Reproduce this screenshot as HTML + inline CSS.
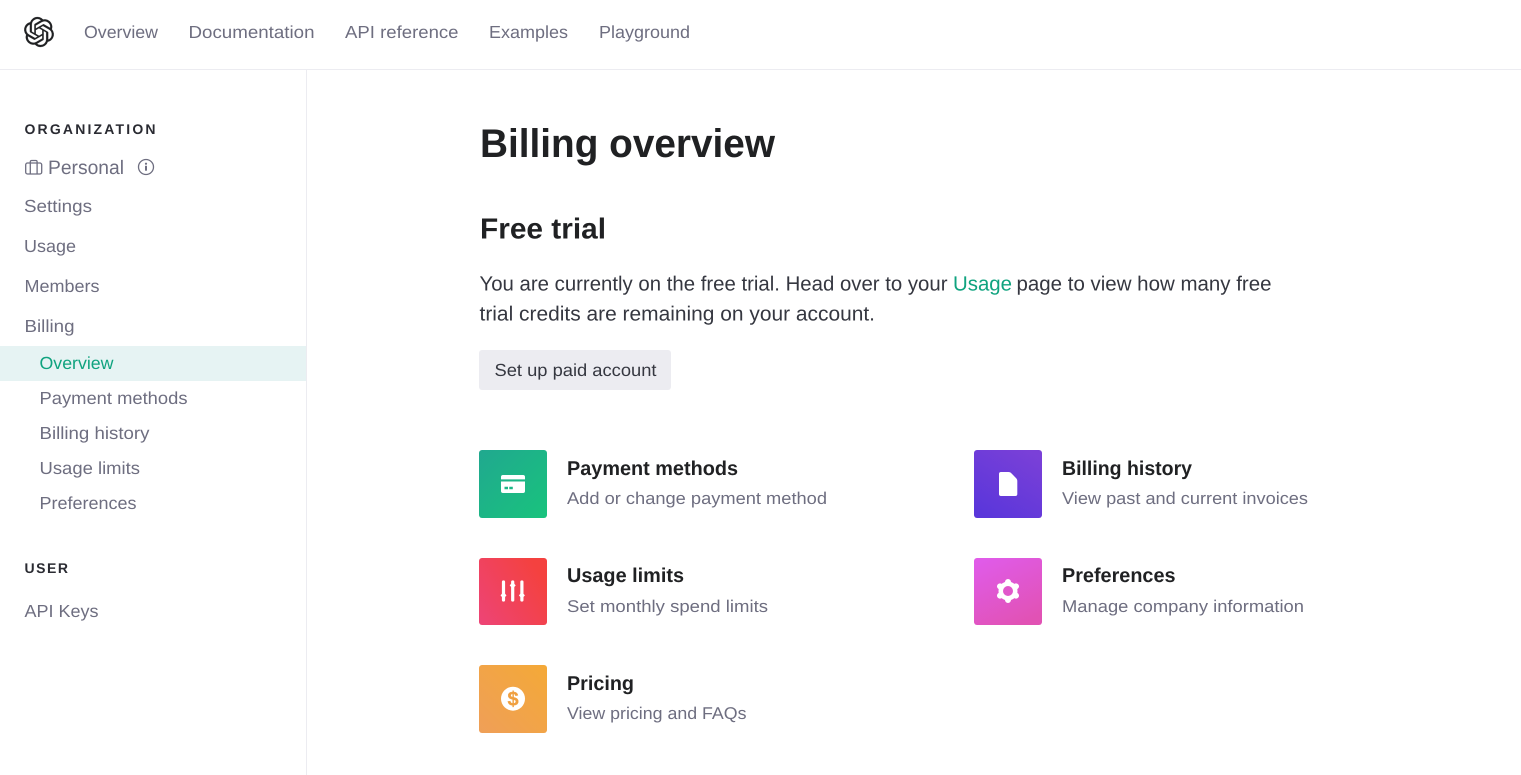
<!DOCTYPE html>
<html lang="en"><head><meta charset="utf-8"><title>Billing overview</title>
<style>
html,body{margin:0;padding:0;background:#fff;width:1521px;height:775px;overflow:hidden}
svg{display:block}
text{font-family:"Liberation Sans",sans-serif;text-rendering:geometricPrecision}
.n{font-size:17.5px;fill:#6e6e80}
.s{font-size:17px;fill:#6e6e80}
.h{font-size:14px;font-weight:700;fill:#2a2b32}
.t{font-size:20px;font-weight:700;fill:#202123}
.p{font-size:20.5px;fill:#353740}
</style></head><body>
<svg width="1521" height="775" viewBox="0 0 1521 775" xmlns="http://www.w3.org/2000/svg">
<defs>
<linearGradient id="g1" x1="0" y1="0" x2="1" y2="1"><stop offset="0" stop-color="#20a88f"/><stop offset="1" stop-color="#19c37d"/></linearGradient>
<linearGradient id="g2" x1="0.8" y1="0" x2="0.2" y2="1"><stop offset="0" stop-color="#7a40d8"/><stop offset="1" stop-color="#5a36da"/></linearGradient>
<linearGradient id="g3" x1="0" y1="1" x2="1" y2="0.4"><stop offset="0" stop-color="#ed4477"/><stop offset="1" stop-color="#f4413f"/></linearGradient>
<linearGradient id="g4" x1="0.2" y1="0" x2="0.7" y2="1"><stop offset="0" stop-color="#e05be8"/><stop offset="1" stop-color="#e152b4"/></linearGradient>
<linearGradient id="g5" x1="0" y1="1" x2="1" y2="0"><stop offset="0" stop-color="#ef9f58"/><stop offset="1" stop-color="#f4a937"/></linearGradient>
</defs>
<rect x="0" y="69" width="1521" height="1" fill="#ececf1"/>
<rect x="306" y="70" width="1" height="705" fill="#ececf1"/>
<g transform="translate(24 17) scale(1.25)"><path fill="#202123" stroke="#202123" stroke-width=".18" d="M22.2819 9.8211a5.9847 5.9847 0 0 0-.5157-4.9108 6.0462 6.0462 0 0 0-6.5098-2.9A6.0651 6.0651 0 0 0 4.9807 4.1818a5.9847 5.9847 0 0 0-3.9977 2.9 6.0462 6.0462 0 0 0 .7427 7.0966 5.98 5.98 0 0 0 .511 4.9107 6.051 6.051 0 0 0 6.5146 2.9001A5.9847 5.9847 0 0 0 13.2599 24a6.0557 6.0557 0 0 0 5.7718-4.2058 5.9894 5.9894 0 0 0 3.9977-2.9001 6.0557 6.0557 0 0 0-.7475-7.0729zm-9.022 12.6081a4.4755 4.4755 0 0 1-2.8764-1.0408l.1419-.0804 4.7783-2.7582a.7948.7948 0 0 0 .3927-.6813v-6.7369l2.02 1.1686a.071.071 0 0 1 .038.052v5.5826a4.504 4.504 0 0 1-4.4945 4.4944zm-9.6607-4.1254a4.4708 4.4708 0 0 1-.5346-3.0137l.142.0852 4.783 2.7582a.7712.7712 0 0 0 .7806 0l5.8428-3.3685v2.3324a.0804.0804 0 0 1-.0332.0615L9.74 19.9502a4.4992 4.4992 0 0 1-6.1408-1.6464zM2.3408 7.8956a4.485 4.485 0 0 1 2.3655-1.9728V11.6a.7664.7664 0 0 0 .3879.6765l5.8144 3.3543-2.0201 1.1685a.0757.0757 0 0 1-.071 0l-4.8303-2.7865A4.504 4.504 0 0 1 2.3408 7.872zm16.5963 3.8558L13.1038 8.364 15.1192 7.2a.0757.0757 0 0 1 .071 0l4.8303 2.7913a4.4944 4.4944 0 0 1-.6765 8.1042v-5.6772a.79.79 0 0 0-.407-.667zm2.0107-3.0231l-.142-.0852-4.7735-2.7818a.7759.7759 0 0 0-.7854 0L9.409 9.2297V6.8974a.0662.0662 0 0 1 .0284-.0615l4.8303-2.7866a4.4992 4.4992 0 0 1 6.6802 4.66zM8.3065 12.863l-2.02-1.1638a.0804.0804 0 0 1-.038-.0567V6.0742a4.4992 4.4992 0 0 1 7.3757-3.4537l-.142.0805L8.704 5.459a.7948.7948 0 0 0-.3927.6813zm1.0976-2.3654l2.602-1.4998 2.6069 1.4998v2.9994l-2.5974 1.4997-2.6067-1.4997Z"/></g>
<text class="n" x="84" y="38" textLength="74" lengthAdjust="spacingAndGlyphs">Overview</text>
<text class="n" x="188.500" y="38" textLength="126" lengthAdjust="spacingAndGlyphs">Documentation</text>
<text class="n" x="345" y="38" textLength="113.500" lengthAdjust="spacingAndGlyphs">API reference</text>
<text class="n" x="489" y="38" textLength="79" lengthAdjust="spacingAndGlyphs">Examples</text>
<text class="n" x="599" y="38" textLength="91" lengthAdjust="spacingAndGlyphs">Playground</text>

<text class="h" x="24.500" y="134" textLength="131" lengthAdjust="spacing">ORGANIZATION</text>
<g fill="none" stroke="#6e6e80" stroke-width="1.3"><rect x="25.700" y="163" width="16" height="11" rx="1.800"/><path d="M30.300 174V163M37.100 174V163M30.300 163V161.800a1.300 1.300 0 0 1 1.300-1.300h4.200a1.300 1.300 0 0 1 1.300 1.300V163"/><circle cx="146" cy="167" r="7.500"/></g>
<circle cx="146" cy="163.700" r="1.100" fill="#6e6e80"/><rect x="145" y="165.800" width="2" height="5" rx=".5" fill="#6e6e80"/>
<text class="n" style="font-size:19.5px" x="48" y="174" textLength="76" lengthAdjust="spacingAndGlyphs">Personal</text>
<text class="n" x="24" y="212" textLength="68" lengthAdjust="spacingAndGlyphs">Settings</text>
<text class="n" x="24" y="252" textLength="52" lengthAdjust="spacingAndGlyphs">Usage</text>
<text class="n" x="24.500" y="292" textLength="75" lengthAdjust="spacingAndGlyphs">Members</text>
<text class="n" x="24.500" y="332" textLength="50" lengthAdjust="spacingAndGlyphs">Billing</text>
<rect x="0" y="346" width="306" height="35" fill="#e6f3f3"/>
<text class="n" style="fill:#10a37f" x="39.500" y="369" textLength="74" lengthAdjust="spacingAndGlyphs">Overview</text>
<text class="n" x="39.500" y="404" textLength="148" lengthAdjust="spacingAndGlyphs">Payment methods</text>
<text class="n" x="39.500" y="439" textLength="110" lengthAdjust="spacingAndGlyphs">Billing history</text>
<text class="n" x="39.500" y="474" textLength="100.500" lengthAdjust="spacingAndGlyphs">Usage limits</text>
<text class="n" x="39.500" y="509" textLength="97" lengthAdjust="spacingAndGlyphs">Preferences</text>
<text class="h" x="24.500" y="573" textLength="43.500" lengthAdjust="spacing">USER</text>
<text class="n" x="24.500" y="617" textLength="74" lengthAdjust="spacingAndGlyphs">API Keys</text>

<text x="480" y="157" font-size="40" font-weight="700" fill="#202123" textLength="295" lengthAdjust="spacingAndGlyphs">Billing overview</text>
<text x="480" y="238.500" font-size="29" font-weight="700" fill="#202123" textLength="126" lengthAdjust="spacingAndGlyphs">Free trial</text>
<text class="p" x="479.500" y="290.500" textLength="468" lengthAdjust="spacingAndGlyphs">You are currently on the free trial. Head over to your</text>
<text class="p" style="fill:#10a37f" x="953" y="290.500" textLength="59" lengthAdjust="spacingAndGlyphs">Usage</text>
<text class="p" x="1016.500" y="290.500" textLength="255" lengthAdjust="spacingAndGlyphs">page to view how many free</text>
<text class="p" x="479.500" y="320.500" textLength="395.500" lengthAdjust="spacingAndGlyphs">trial credits are remaining on your account.</text>
<rect x="479" y="350" width="192" height="40" rx="3" fill="#ececf1"/>
<text x="494.500" y="376" font-size="17.500" fill="#353740" textLength="162" lengthAdjust="spacingAndGlyphs">Set up paid account</text>

<rect x="479" y="450" width="68" height="68" rx="3" fill="url(#g1)"/>
<path fill="#fff" fill-rule="evenodd" d="M503 475h20a2 2 0 0 1 2 2v2.400h-24V477a2 2 0 0 1 2-2zM501 481.500h24V491a2 2 0 0 1-2 2h-20a2 2 0 0 1-2-2zM504.500 489.300h3.500v-2.600h-3.500zM509.300 489.300h3.500v-2.600h-3.500z"/>
<text class="t" x="567" y="475" textLength="171" lengthAdjust="spacingAndGlyphs">Payment methods</text>
<text class="s" x="567" y="504" textLength="260" lengthAdjust="spacingAndGlyphs">Add or change payment method</text>

<rect x="974" y="450" width="68" height="68" rx="3" fill="url(#g2)"/>
<path fill="#fff" d="M1001 472h7.500c1 0 2 .4 2.700 1.100l5 5.200c.7.700 1.100 1.700 1.100 2.700V494a2 2 0 0 1-2 2h-14.300a2 2 0 0 1-2-2v-20a2 2 0 0 1 2-2z"/>
<text class="t" x="1062" y="475" textLength="130" lengthAdjust="spacingAndGlyphs">Billing history</text>
<text class="s" x="1062" y="504" textLength="246" lengthAdjust="spacingAndGlyphs">View past and current invoices</text>

<rect x="479" y="558" width="68" height="67" rx="3" fill="url(#g3)"/>
<g stroke="#fff" stroke-width="3.200" stroke-linecap="round" fill="none"><path d="M503.500 582V600M512.700 582V600M521.900 582V600"/></g>
<g fill="#fff"><path d="M503.500 592l3 3.400-3 3.400-3-3.400zM512.700 582l3 3.400-3 3.400-3-3.400zM521.900 592l3 3.400-3 3.400-3-3.400z"/></g>
<text class="t" x="567" y="582" textLength="117" lengthAdjust="spacingAndGlyphs">Usage limits</text>
<text class="s" x="567" y="612" textLength="201" lengthAdjust="spacingAndGlyphs">Set monthly spend limits</text>

<rect x="974" y="558" width="68" height="67" rx="3" fill="url(#g4)"/>
<g stroke="#fff" stroke-width="6" stroke-linecap="round"><path d="M1008 582V600M1000 586.400L1016 595.600M1000 595.600L1016 586.400"/></g>
<circle cx="1008" cy="591" r="9.500" fill="#fff"/>
<circle cx="1008" cy="591" r="5" fill="#e157cb"/>
<text class="t" x="1062" y="582" textLength="113.500" lengthAdjust="spacingAndGlyphs">Preferences</text>
<text class="s" x="1062" y="612" textLength="242" lengthAdjust="spacingAndGlyphs">Manage company information</text>

<rect x="479" y="665" width="68" height="68" rx="3" fill="url(#g5)"/>
<circle cx="513" cy="698.700" r="12" fill="#fff"/>
<text x="513" y="705.500" font-size="20" font-weight="700" fill="#f0a040" stroke="#f0a040" stroke-width=".3" text-anchor="middle">$</text>
<text class="t" x="567" y="690" textLength="67" lengthAdjust="spacingAndGlyphs">Pricing</text>
<text class="s" x="567" y="719" textLength="179.500" lengthAdjust="spacingAndGlyphs">View pricing and FAQs</text>
</svg>
</body></html>
